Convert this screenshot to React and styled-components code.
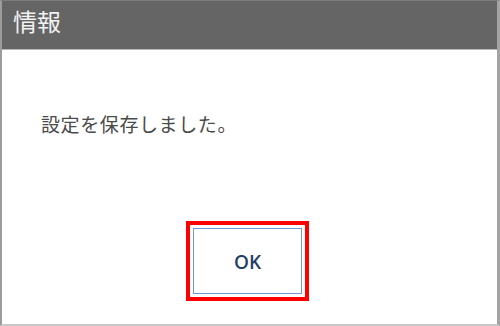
import React from "react";
import styled, { createGlobalStyle } from "styled-components";

const GlobalStyle = createGlobalStyle`
  html, body {
    margin: 0;
    padding: 0;
    background: #ffffff;
  }
  * { box-sizing: border-box; }
`;

const Frame = styled.div`
  width: 500px;
  height: 326px;
  display: flex;
  flex-direction: column;
  background: #ffffff;
  border-top: 1px solid #7c7c7c;
  border-left: 2px solid #9c9c9c;
  border-right: 3px solid #a4a4a4;
  border-bottom: 2px solid #c9c9c9;
  font-family: "Noto Sans CJK JP", "Noto Sans", sans-serif;
`;

const TitleBar = styled.div`
  height: 49px;
  flex: none;
  display: flex;
  align-items: center;
  padding: 0 0 8px 11px;
  background: #656565;
  border-bottom: 1px solid #b6b6b6;
  color: #f2f2f2;
  font-size: 24px;
  line-height: 30px;
`;

const Body = styled.div`
  flex: 1;
  display: flex;
  flex-direction: column;
`;

const Message = styled.p`
  margin: 61px 0 0 39px;
  font-size: 19px;
  line-height: 26px;
  letter-spacing: 0.6px;
  color: #4a4a4a;
`;

const Footer = styled.div`
  display: flex;
  justify-content: center;
  padding-right: 4px;
  margin-top: 84px;
`;

const Highlight = styled.div`
  border: 4px solid #ff0000;
  padding: 3px;
`;

const Button = styled.button`
  width: 109px;
  height: 66px;
  display: flex;
  align-items: center;
  justify-content: center;
  background: #ffffff;
  border: 1px solid #6f99dc;
  color: #243f68;
  font-family: "Open Sans", "Noto Sans", sans-serif;
  font-weight: 600;
  font-size: 19px;
  padding: 2px 0 0;
`;

export default function App() {
  return (
    <>
      <GlobalStyle />
      <Frame>
        <TitleBar>情報</TitleBar>
        <Body>
          <Message>設定を保存しました。</Message>
          <Footer>
            <Highlight>
              <Button>OK</Button>
            </Highlight>
          </Footer>
        </Body>
      </Frame>
    </>
  );
}
